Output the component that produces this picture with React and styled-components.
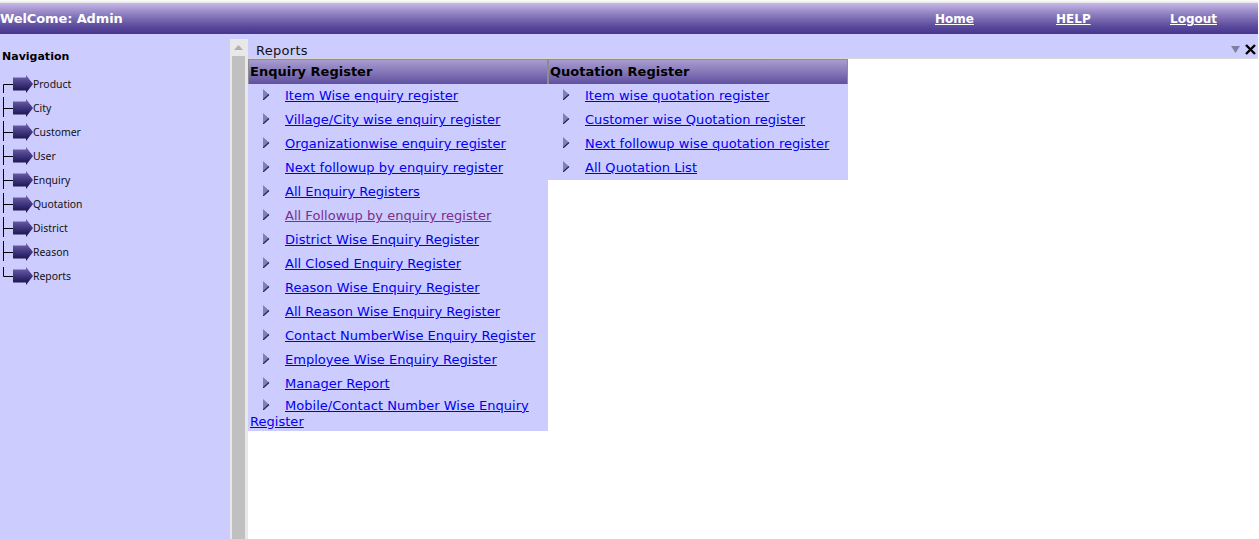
import React from 'react';
import styled, { createGlobalStyle } from 'styled-components';

const Global = createGlobalStyle`
  html, body { margin: 0; padding: 0; height: 100%; background: #fff; overflow: hidden; }
  body { font-family: "DejaVu Sans", Verdana, sans-serif; }
  #root { height: 100%; }
`;
const Page = styled.div`
  height: 539px; display: flex; flex-direction: column; padding: 3px 1px 0 0; box-sizing: border-box;
  background: #fff;
`;
const TopEdge = styled.div`
  position: absolute; left: 0; right: 1px; top: 0; height: 3px;
  background: linear-gradient(#fff, #e4e4e4);
`;
const Header = styled.header`
  height: 31px; flex: none; display: flex; align-items: center; position: relative;
  background: linear-gradient(#c8b8e8 0%, #8f80c0 35%, #5c4a9c 75%, #453590 100%);
`;
const Welcome = styled.div`
  width: 935px; color: #fff; font: bold 13px "DejaVu Sans", sans-serif; letter-spacing: -0.120px; white-space: nowrap;
`;
const TopLink = styled.a`
  color: #fff; font: bold 12px "DejaVu Sans", sans-serif; text-decoration: underline;
  width: ${p => p.$w}px;
`;
const Body = styled.div`
  flex: 1; display: flex; min-height: 0;
`;
const Sidebar = styled.nav`
  width: 230px; flex: none; background: #ccccff; padding: 16px 0 0 2px; box-sizing: border-box;
`;
const NavTitle = styled.div`
  font: bold 11px/13px "DejaVu Sans", sans-serif; color: #000; margin-bottom: 9px;
`;
const TreeRow = styled.div`
  height: 24px; display: flex; align-items: center; margin-left: -2px;
`;
const TreeLabel = styled.span`
  font: 10.400px "Noto Sans", sans-serif; color: #111;
`;
const Scroll = styled.div`
  width: 18px; flex: none; padding: 5px 3px 0 2px; box-sizing: border-box;
  display: flex; flex-direction: column;
  background: linear-gradient(#ccccff 5px, #e8e8e8 5px);
`;
const ScrollUp = styled.div`
  height: 17px; flex: none; display: flex; align-items: center; justify-content: center;
`;
const ScrollThumb = styled.div`
  flex: 1; background: #c0c0c0;
`;
const Main = styled.main`
  flex: 1; min-width: 0; display: flex; flex-direction: column; background: #fff;
`;
const TitleBar = styled.div`
  height: 24px; flex: none; background: #ccccff; border-bottom: 1px solid #d8d8d8; box-sizing: content-box;
  display: block; position: relative; padding-left: 8px; color: #111;
  font: 13px/18px "DejaVu Sans", sans-serif; letter-spacing: 0.280px;
`;
const TitleText = styled.span`
  display: block; padding-top: 8px;
`;
const TitleIcons = styled.div`
  position: absolute; right: 2px; top: 10px; display: flex; align-items: center; gap: 5px;
`;
const Columns = styled.div`
  display: flex; align-items: flex-start;
`;
const Column = styled.section`
  width: 300px; flex: none;
`;
const ColHead = styled.h2`
  margin: 0; height: 25px; box-sizing: border-box; padding: 0 0 2px 1px; display: flex; align-items: center;
  border: 1px solid #8c8c8c; border-bottom: 0;
  background: linear-gradient(#a89cd0 0%, #8c7fbc 40%, #5f50a0 100%);
  color: #000; font: bold 13px "DejaVu Sans", sans-serif;
`;
const List = styled.div`
  background: #ccccff;
`;
const Row = styled.div`
  min-height: 24px; box-sizing: border-box; padding: 1.500px 2px; display: flex; align-items: center;
`;
const RowText = styled.div`
  font: 13px/16px "DejaVu Sans", sans-serif; letter-spacing: 0.030px;
`;
const Bullet = styled.svg`
  display: inline-block; width: 7px; height: 11px; margin: 0 15px 0 13px; vertical-align: baseline;
`;
const Link = styled.a`
  color: ${p => p.$visited ? '#7b2f86' : '#0000ee'}; text-decoration: underline;
`;

const Arrow = () => (
  <svg width="20" height="18" viewBox="0 0 20 18" style={{ display: 'block' }}>
    <defs>
      <linearGradient id="ag" x1="0" y1="0" x2="0" y2="1">
        <stop offset="0" stopColor="#7468b0" />
        <stop offset="0.5" stopColor="#40357f" />
        <stop offset="1" stopColor="#120d40" />
      </linearGradient>
    </defs>
    <path d="M0 2.500H13V0L20 9L13 18V15.500H0Z" fill="url(#ag)" />
  </svg>
);
const connectorPaths = {
  first: 'M3.500 21V12.500H13',
  mid: 'M3.500 1V21M3.500 12.500H13',
  last: 'M3.500 3V12.500H13',
};
const Connector = ({ kind }) => (
  <svg width="13" height="24" viewBox="0 0 13 24" style={{ display: 'block', flex: 'none' }}>
    <path d={connectorPaths[kind]} stroke="#000" fill="none" />
  </svg>
);
const BulletIcon = () => (
  <Bullet viewBox="0 0 7 11">
    <path d="M0 0L6 5.500L0 11Z" fill="#8080b8" />
    <path d="M6 5.500L0 11" stroke="#20204a" strokeWidth="1.200" />
  </Bullet>
);

const nav = ['Product','City','Customer','User','Enquiry','Quotation','District','Reason','Reports'];
const enquiry = ['Item Wise enquiry register','Village/City wise enquiry register','Organizationwise enquiry register','Next followup by enquiry register','All Enquiry Registers','All Followup by enquiry register','District Wise Enquiry Register','All Closed Enquiry Register','Reason Wise Enquiry Register','All Reason Wise Enquiry Register','Contact NumberWise Enquiry Register','Employee Wise Enquiry Register','Manager Report','Mobile/Contact Number Wise Enquiry Register'];
const quotation = ['Item wise quotation register','Customer wise Quotation register','Next followup wise quotation register','All Quotation List'];

const Items = ({ items }) => (
  <List>
    {items.map(t => (
      <Row key={t}>
        <RowText>
          <BulletIcon />
          <Link href="#" $visited={t.startsWith('All Followup')}>{t}</Link>
        </RowText>
      </Row>
    ))}
  </List>
);

export default function App() {
  return (
    <Page>
      <Global />
      <TopEdge />
      <Header>
        <Welcome>WelCome: Admin</Welcome>
        <TopLink href="#" $w={121}>Home</TopLink>
        <TopLink href="#" $w={114}>HELP</TopLink>
        <TopLink href="#" $w={88}>Logout</TopLink>
      </Header>
      <Body>
        <Sidebar>
          <NavTitle>Navigation</NavTitle>
          {nav.map((n, i) => (
            <TreeRow key={n}>
              <Connector kind={i === 0 ? 'first' : i === nav.length - 1 ? 'last' : 'mid'} />
              <Arrow />
              <TreeLabel>{n}</TreeLabel>
            </TreeRow>
          ))}
        </Sidebar>
        <Scroll>
          <ScrollUp>
            <svg width="9" height="5" viewBox="0 0 9 5"><path d="M0 5L4.500 0L9 5Z" fill="#b0b0b0" /></svg>
          </ScrollUp>
          <ScrollThumb />
        </Scroll>
        <Main>
          <TitleBar>
            <TitleText>Reports</TitleText>
            <TitleIcons>
              <svg width="9" height="7" viewBox="0 0 9 7"><path d="M0 0H9L4.500 7Z" fill="#8080a0" /></svg>
              <svg width="11" height="11" viewBox="0 0 11 11"><path d="M1 1L10 10M10 1L1 10" stroke="#000" strokeWidth="2.400" /></svg>
            </TitleIcons>
          </TitleBar>
          <Columns>
            <Column>
              <ColHead>Enquiry Register</ColHead>
              <Items items={enquiry} />
            </Column>
            <Column>
              <ColHead>Quotation Register</ColHead>
              <Items items={quotation} />
            </Column>
          </Columns>
        </Main>
      </Body>
    </Page>
  );
}
